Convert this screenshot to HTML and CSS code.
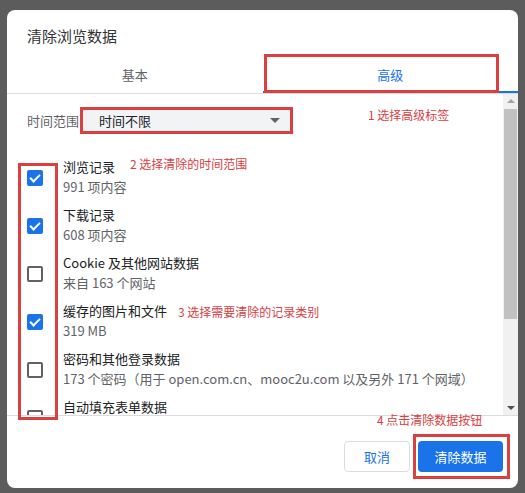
FILE: index.html
```html
<!DOCTYPE html>
<html lang="zh-CN">
<head>
    <meta charset="UTF-8">
    <meta name="viewport" content="width=device-width, initial-scale=1.0">
    <title>清除浏览数据</title>
    <link rel="stylesheet" href="styles.css">
</head>
<body>
    <div class="dialog">
        <div class="dialog-title">清除浏览数据</div>

        <div class="tabs">
            <div class="tab">基本</div>
            <div class="tab tab-active">高级</div>
        </div>

        <div class="dialog-body">
            <div class="content">
                <div class="time-row">
                    <span class="time-label">时间范围</span>
                    <div class="select">
                        <span>时间不限</span>
                        <span class="select-arrow"></span>
                    </div>
                </div>

                <div class="items">
                    <div class="item">
                        <span class="checkbox checked"></span>
                        <div class="item-text">
                            <div class="item-title">浏览记录</div>
                            <div class="item-sub">991 项内容</div>
                        </div>
                    </div>
                    <div class="item">
                        <span class="checkbox checked"></span>
                        <div class="item-text">
                            <div class="item-title">下载记录</div>
                            <div class="item-sub">608 项内容</div>
                        </div>
                    </div>
                    <div class="item">
                        <span class="checkbox"></span>
                        <div class="item-text">
                            <div class="item-title">Cookie 及其他网站数据</div>
                            <div class="item-sub">来自 163 个网站</div>
                        </div>
                    </div>
                    <div class="item">
                        <span class="checkbox checked"></span>
                        <div class="item-text">
                            <div class="item-title">缓存的图片和文件</div>
                            <div class="item-sub">319 MB</div>
                        </div>
                    </div>
                    <div class="item">
                        <span class="checkbox"></span>
                        <div class="item-text">
                            <div class="item-title">密码和其他登录数据</div>
                            <div class="item-sub">173 个密码（用于 open.com.cn、mooc2u.com 以及另外 171 个网域）</div>
                        </div>
                    </div>
                    <div class="item">
                        <span class="checkbox"></span>
                        <div class="item-text">
                            <div class="item-title">自动填充表单数据</div>
                            <div class="item-sub">&nbsp;</div>
                        </div>
                    </div>
                </div>
            </div>
            <div class="scrollbar">
                <span class="scroll-arrow up"></span>
                <div class="scroll-track"><div class="scroll-thumb"></div></div>
                <span class="scroll-arrow down"></span>
            </div>
        </div>

        <div class="dialog-footer">
            <button class="btn btn-cancel">取消</button>
            <button class="btn btn-primary">清除数据</button>
        </div>

        <!-- annotations drawn over the screenshot -->
        <div class="mark mark-tab"></div>
        <div class="mark mark-checks"></div>
        <div class="mark mark-btn"></div>
        <div class="note note1">1 选择高级标签</div>
        <div class="note note2">2 选择清除的时间范围</div>
        <div class="note note3">3 选择需要清除的记录类别</div>
        <div class="note note4">4 点击清除数据按钮</div>
    </div>
</body>
</html>
```

FILE: styles.css
```css
html, body {
    margin: 0;
    padding: 0;
    height: 100%;
    overflow: hidden;
}
body {
    background-color: #5c5c5c;
    font-family: "Noto Sans CJK SC", "Noto Sans", "Liberation Sans", sans-serif;
    padding: 10px 0 0 7px;
    box-sizing: border-box;
}
.dialog {
    position: relative;
    width: 511px;
    height: 478px;
    background: #fff;
    border-radius: 8px;
    display: flex;
    flex-direction: column;
    overflow: hidden;
}
.dialog-title {
    padding: 16px 0 9px 20px;
    font-size: 15px;
    line-height: 20px;
    color: #333;
}
.tabs {
    display: flex;
    height: 38px;
    border-bottom: 1px solid #dadce0;
}
.tab {
    flex: 1;
    display: flex;
    align-items: center;
    justify-content: center;
    font-size: 13px;
    color: #5f6368;
    box-sizing: border-box;
}
.tab-active {
    color: #1a73e8;
    border-bottom: 2px solid #1a73e8;
    padding-top: 2px;
}
.dialog-body {
    height: 321px;
    display: flex;
}
.content {
    flex: 1;
    padding: 13px 0 0 20px;
    overflow: hidden;
}
.time-row {
    display: flex;
    align-items: center;
}
.time-label {
    font-size: 13px;
    color: #5f6368;
    width: 53px;
}
.select {
    width: 213px;
    height: 27px;
    box-sizing: border-box;
    border: 3px solid #d9403f;
    background: #f1f3f4;
    display: flex;
    align-items: center;
    justify-content: space-between;
    padding: 0 10px 0 16px;
    font-size: 13px;
    color: #202124;
}
.select-arrow {
    width: 0;
    height: 0;
    border-left: 5px solid transparent;
    border-right: 5px solid transparent;
    border-top: 5px solid #5f6368;
}
.items {
    margin-top: 19px;
}
.item {
    display: flex;
    align-items: center;
    height: 48px;
}
.checkbox {
    width: 16px;
    height: 16px;
    box-sizing: border-box;
    border: 2px solid #5f6368;
    border-radius: 2px;
    margin-right: 20px;
    margin-top: 1px;
    flex-shrink: 0;
    position: relative;
}
.checkbox.checked {
    background: #1a73e8;
    border-color: #1a73e8;
}
.checkbox.checked::after {
    content: "";
    position: absolute;
    left: 3px;
    top: 0px;
    width: 4px;
    height: 8px;
    border-right: 2px solid #fff;
    border-bottom: 2px solid #fff;
    transform: rotate(45deg);
}
.item-title,
.item-sub {
    font-size: 13px;
    line-height: 20px;
    white-space: nowrap;
}
.item-title {
    color: #202124;
}
.item-sub {
    color: #5f6368;
}
.scrollbar {
    width: 15px;
    background: #f1f1f1;
    display: flex;
    flex-direction: column;
    align-items: center;
}
.scroll-track {
    flex: 1;
    width: 100%;
    padding: 0 1px;
    box-sizing: border-box;
}
.scroll-thumb {
    margin-top: 1px;
    height: 210px;
    background: #c1c1c1;
}
.scroll-arrow {
    width: 0;
    height: 0;
    border-left: 4px solid transparent;
    border-right: 4px solid transparent;
    margin: 5px 0;
}
.scroll-arrow.up {
    border-bottom: 4px solid #a3a3a3;
}
.scroll-arrow.down {
    border-top: 4px solid #505050;
}
.dialog-footer {
    flex: 1;
    border-top: 1px solid #dadce0;
    display: flex;
    justify-content: flex-end;
    align-items: flex-start;
    gap: 8px;
    padding: 25px 15px 0 0;
}
.btn {
    height: 31px;
    border-radius: 4px;
    font-family: inherit;
    font-size: 13px;
    padding: 0;
    cursor: pointer;
}
.btn-cancel {
    width: 66px;
    background: #fff;
    border: 1px solid #dadce0;
    color: #1a73e8;
}
.btn-primary {
    width: 85px;
    background: #1a73e8;
    border: none;
    color: #fff;
}
.mark {
    position: absolute;
    border: 3px solid #d9403f;
    box-sizing: border-box;
}
.mark-tab {
    left: 257px;
    top: 44px;
    width: 235px;
    height: 39px;
}
.mark-checks {
    left: 11px;
    top: 153px;
    width: 40px;
    height: 257px;
}
.mark-btn {
    left: 406px;
    top: 424px;
    width: 97px;
    height: 45px;
}
.note {
    position: absolute;
    font-size: 12px;
    line-height: 16px;
    color: #d9403f;
    white-space: nowrap;
}
.note1 { left: 361px; top: 97px; }
.note2 { left: 123px; top: 146px; }
.note3 { left: 171px; top: 294px; }
.note4 { left: 370px; top: 402px; }
```
